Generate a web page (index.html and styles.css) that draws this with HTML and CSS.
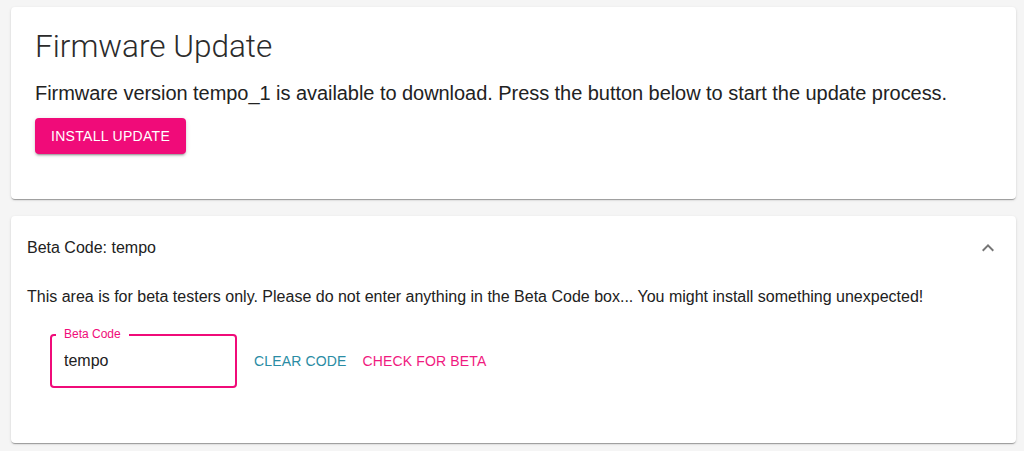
FILE: index.html
```html
<!DOCTYPE html>
<html lang="en">
<head>
    <meta charset="UTF-8">
    <title>Firmware Update</title>
    <link rel="stylesheet" href="styles.css">
</head>
<body>

<div class="card update-card">
    <h1 class="title">Firmware Update</h1>
    <p class="lead">Firmware version tempo_1 is available to download. Press the button below to start the update process.</p>
    <button class="btn-contained">Install Update</button>
</div>

<div class="card accordion">
    <div class="accordion-summary">
        <span class="summary-text">Beta Code: tempo</span>
        <svg class="chevron" viewBox="0 0 24 24" width="24" height="24">
            <path d="M12 8l-6 6 1.41 1.41L12 10.83l4.59 4.58L18 14z"/>
        </svg>
    </div>
    <div class="accordion-details">
        <p class="note">This area is for beta testers only. Please do not enter anything in the Beta Code box... You might install something unexpected!</p>
        <div class="beta-row">
            <div class="text-field">
                <label class="field-label">Beta Code</label>
                <input type="text" value="tempo">
            </div>
            <button class="btn-text teal">Clear Code</button>
            <button class="btn-text pink">Check for Beta</button>
        </div>
    </div>
</div>

</body>
</html>
```

FILE: styles.css
```css
body {
    margin: 0;
    padding: 7px 8px 8px 11px;
    background: #f5f5f5;
    font-family: "Liberation Sans", Arial, sans-serif;
    color: #212121;
}
.card {
    background: #fff;
    border-radius: 4px;
    box-shadow: 0 2px 1px -1px rgba(0,0,0,0.2), 0 1px 1px 0 rgba(0,0,0,0.14), 0 1px 3px 0 rgba(0,0,0,0.12);
}
.update-card {
    padding: 22px 24px 45px 24px;
    margin-bottom: 17px;
}
.title {
    margin: 0;
    font-family: Roboto, "Liberation Sans", sans-serif;
    font-weight: 300;
    font-size: 31.5px;
    line-height: 36px;
    color: #2b2b2b;
}
.lead {
    margin: 15px 0 12px 0;
    font-size: 20px;
    line-height: 26px;
    letter-spacing: -0.05px;
    color: #222;
}
.btn-contained {
    display: block;
    font-family: "Liberation Sans", Arial, sans-serif;
    text-transform: uppercase;
    font-size: 14px;
    letter-spacing: 0.3px;
    color: #fff;
    background: #f00b79;
    border: none;
    border-radius: 4px;
    padding: 0 16px;
    height: 36px;
    box-shadow: 0 3px 1px -2px rgba(0,0,0,0.2), 0 2px 2px 0 rgba(0,0,0,0.14), 0 1px 5px 0 rgba(0,0,0,0.12);
    cursor: pointer;
}
.accordion-summary {
    height: 64px;
    padding: 0 16px;
    display: flex;
    align-items: center;
    justify-content: space-between;
}
.summary-text {
    font-size: 16px;
}
.chevron {
    fill: rgba(0,0,0,0.54);
}
.accordion-details {
    padding: 8px 16px 55px 16px;
}
.note {
    margin: 0;
    font-size: 16px;
    line-height: 18px;
}
.beta-row {
    display: flex;
    align-items: center;
    margin: 28px 0 0 23px;
}
.text-field {
    position: relative;
    margin-right: 9px;
    padding: 15px 12px 0 12px;
    width: 187px;
    height: 54px;
    box-sizing: border-box;
    border: 2px solid #f00b79;
    border-radius: 4px;
}
.field-label {
    position: absolute;
    top: -8px;
    left: 4px;
    padding: 0 8px;
    background: #fff;
    font-size: 12px;
    line-height: 12px;
    color: #f00b79;
}
.text-field input {
    display: block;
    border: none;
    outline: none;
    padding: 0;
    margin: 0;
    width: 100%;
    height: 19px;
    line-height: 19px;
    font-family: "Liberation Sans", Arial, sans-serif;
    font-size: 16px;
    color: #212121;
    background: transparent;
}
.btn-text {
    background: none;
    border: none;
    padding: 8px;
    font-family: "Liberation Sans", Arial, sans-serif;
    font-size: 14px;
    letter-spacing: 0.15px;
    text-transform: uppercase;
    cursor: pointer;
}
.teal {
    color: #2a8ca4;
}
.pink {
    color: #f01a80;
}
```
